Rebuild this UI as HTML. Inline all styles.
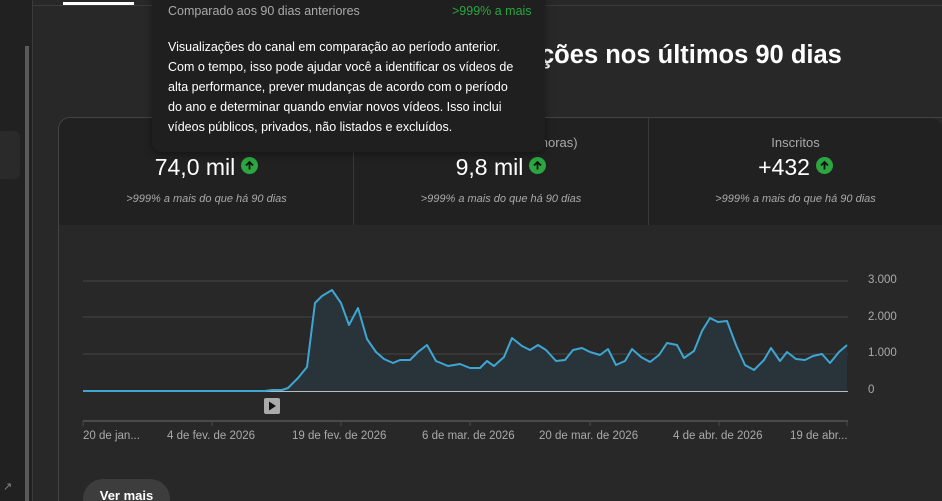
<!DOCTYPE html>
<html style="overflow:hidden"><head><meta charset="utf-8"><style>
html,body{margin:0;width:942px;height:501px;overflow:hidden}
body{background:#282828;font-family:"Liberation Sans",sans-serif;position:relative;color:#fff}
.abs{position:absolute}
.g{width:17px;height:17px;border-radius:50%;background:#2ba640;display:inline-block;vertical-align:middle;position:relative;margin-left:6px;top:-3px}
.g svg{position:absolute;left:3px;top:3px}
.mt{font-size:13px;color:#aaa;text-align:center}
.mv{font-size:23px;color:#fff;text-align:center}
.ms{font-size:11px;color:#aaa;font-style:italic;text-align:center}
.xl{font-size:11.5px;color:#aaa;top:430px}
.yl{font-size:11.5px;color:#aaa;left:868px}
</style></head><body>
<div class="abs" style="left:0;top:0;width:32px;height:501px;background:#212121"></div>
<div class="abs" style="left:0;top:131px;width:20px;height:48px;background:#2a2a2a;border-radius:0 6px 6px 0"></div>
<div class="abs" style="left:25px;top:46px;width:4px;height:455px;background:#5a5a5a"></div>
<div class="abs" style="left:32px;top:0;width:1px;height:501px;background:#3a3a3a"></div>
<div class="abs" style="left:33px;top:5px;width:909px;height:1px;background:#3a3a3a"></div>
<div class="abs" style="left:63px;top:2px;width:71px;height:3px;background:#fff"></div>
<div class="abs" style="left:3px;top:480px;color:#888;font-size:11px">↗</div>

<div class="abs" style="left:58px;top:117px;width:900px;height:400px;border:1px solid #444;border-radius:12px;background:#282828"></div>
<div class="abs" style="left:59px;top:118px;width:883px;height:107px;background:#212121;border-radius:11px 11px 0 0"></div>
<div class="abs" style="left:353px;top:118px;width:1px;height:107px;background:#3a3a3a"></div>
<div class="abs" style="left:648px;top:118px;width:1px;height:107px;background:#3a3a3a"></div>

<div class="abs" style="left:540px;top:41px;font-size:25.5px;font-weight:bold">ções nos últimos 90 dias</div>

<div class="abs mv" style="left:59px;top:154px;width:295px">74,0 mil<span class="g"><svg width="11" height="11" viewBox="0 0 11 11"><path d="M5.5 9.5V2M2 5.5l3.5-3.5 3.5 3.5" stroke="#111" stroke-width="1.8" fill="none"/></svg></span></div>
<div class="abs ms" style="left:59px;top:193px;width:295px">&gt;999% a mais do que há 90 dias</div>
<div class="abs mt" style="left:354px;top:135px;width:294px">Tempo de exibição (horas)</div>
<div class="abs mv" style="left:354px;top:154px;width:294px">9,8 mil<span class="g"><svg width="11" height="11" viewBox="0 0 11 11"><path d="M5.5 9.5V2M2 5.5l3.5-3.5 3.5 3.5" stroke="#111" stroke-width="1.8" fill="none"/></svg></span></div>
<div class="abs ms" style="left:354px;top:193px;width:294px">&gt;999% a mais do que há 90 dias</div>
<div class="abs mt" style="left:649px;top:135px;width:293px">Inscritos</div>
<div class="abs mv" style="left:649px;top:154px;width:293px">+432<span class="g"><svg width="11" height="11" viewBox="0 0 11 11"><path d="M5.5 9.5V2M2 5.5l3.5-3.5 3.5 3.5" stroke="#111" stroke-width="1.8" fill="none"/></svg></span></div>
<div class="abs ms" style="left:649px;top:193px;width:293px">&gt;999% a mais do que há 90 dias</div>

<svg class="abs" style="left:0;top:0" width="942" height="501">
<g stroke="#3c3c3c" stroke-width="1.5"><line x1="83" y1="281" x2="848" y2="281"/><line x1="83" y1="317" x2="848" y2="317"/><line x1="83" y1="354" x2="848" y2="354"/></g>
<line x1="83" y1="421" x2="848" y2="421" stroke="#4a4a4a" stroke-width="2"/>
<g stroke="#4a4a4a" stroke-width="1"><line x1="83" y1="421" x2="83" y2="426"/><line x1="212" y1="421" x2="212" y2="426"/><line x1="341" y1="421" x2="341" y2="426"/><line x1="470" y1="421" x2="470" y2="426"/><line x1="590" y1="421" x2="590" y2="426"/><line x1="719" y1="421" x2="719" y2="426"/><line x1="847" y1="421" x2="847" y2="426"/></g>
<polygon fill="#29333a" points="83,391 265,391 272,390 282,390 288,388 298,378 307,367 315,303 322,296 332,290 341,303 349,325 358,308 367,339 376,352 384,359 393,363 400,360 410,360 418,352 427,345 436,361 448,366 460,364 470,368 480,368 487,361 494,366 504,357 512,338 522,346 530,350 538,345 546,350 556,361 565,360 573,350 582,348 590,352 600,355 608,349 616,365 625,361 632,349 641,357 650,362 659,355 667,343 677,345 684,358 694,351 702,331 710,318 718,322 727,321 736,345 745,365 754,370 764,360 771,348 780,361 787,352 796,359 805,360 813,356 822,354 830,363 839,352 847,345 847,391"/>
<line x1="83" y1="391.5" x2="848" y2="391.5" stroke="#bbb" stroke-width="1"/>
<polyline fill="none" stroke="#3ea6d2" stroke-width="2" stroke-linejoin="round" points="83,391 265,391 272,390 282,390 288,388 298,378 307,367 315,303 322,296 332,290 341,303 349,325 358,308 367,339 376,352 384,359 393,363 400,360 410,360 418,352 427,345 436,361 448,366 460,364 470,368 480,368 487,361 494,366 504,357 512,338 522,346 530,350 538,345 546,350 556,361 565,360 573,350 582,348 590,352 600,355 608,349 616,365 625,361 632,349 641,357 650,362 659,355 667,343 677,345 684,358 694,351 702,331 710,318 718,322 727,321 736,345 745,365 754,370 764,360 771,348 780,361 787,352 796,359 805,360 813,356 822,354 830,363 839,352 847,345"/>
<rect x="264" y="398" width="16" height="16" rx="2" fill="#aaa"/><path d="M269 401.5v9l7-4.5z" fill="#111"/>
</svg>
<div class="abs yl" style="top:274px">3.000</div>
<div class="abs yl" style="top:311px">2.000</div>
<div class="abs yl" style="top:347px">1.000</div>
<div class="abs yl" style="top:384px">0</div>
<div class="abs xl" style="left:83px">20 de jan...</div>
<div class="abs xl" style="left:167px">4 de fev. de 2026</div>
<div class="abs xl" style="left:292px">19 de fev. de 2026</div>
<div class="abs xl" style="left:422px">6 de mar. de 2026</div>
<div class="abs xl" style="left:539px">20 de mar. de 2026</div>
<div class="abs xl" style="left:673px">4 de abr. de 2026</div>
<div class="abs xl" style="left:790px">19 de abr...</div>
<div class="abs" style="left:83px;top:479px;width:87px;height:40px;border-radius:20px;background:#3d3d3d;font-size:13px;font-weight:bold;text-align:center;line-height:34px">Ver mais</div>

<div class="abs" style="left:152px;top:-10px;width:393px;height:162px;background:#1f1f1f;border-radius:10px;box-shadow:0 2px 8px rgba(0,0,0,.4)"></div>
<div class="abs" style="left:168px;top:4px;font-size:12.5px;color:#aaa">Comparado aos 90 dias anteriores</div>
<div class="abs" style="left:452px;top:4px;font-size:12.5px;color:#2ba640">&gt;999% a mais</div>
<div class="abs" style="left:168px;top:37px;white-space:nowrap;font-size:12.5px;line-height:20px;color:#fff">Visualizações do canal em comparação ao período anterior.<br>Com o tempo, isso pode ajudar você a identificar os vídeos de<br>alta performance, prever mudanças de acordo com o período<br>do ano e determinar quando enviar novos vídeos. Isso inclui<br>vídeos públicos, privados, não listados e excluídos.</div>
</body></html>
